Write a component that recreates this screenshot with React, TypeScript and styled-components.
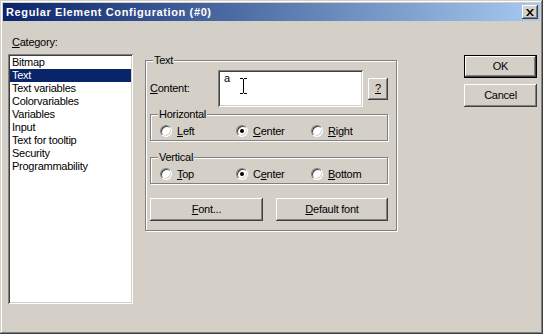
import React from 'react'
import styled, { createGlobalStyle } from 'styled-components'

const GlobalStyle = createGlobalStyle`
  html, body {
    margin: 0;
    padding: 0;
    background: #d4d0c8;
  }
  * {
    box-sizing: border-box;
  }
`

const face = '#d4d0c8'
const shadow = '#808080'
const dark = '#404040'

const Window = styled.div`
  width: 543px;
  height: 334px;
  padding: 3px;
  background: ${face};
  box-shadow: inset -1px -1px ${dark}, inset 1px 1px ${face}, inset -2px -2px ${shadow}, inset 2px 2px #fff;
  font-family: 'Liberation Sans', Arial, sans-serif;
  font-size: 11px;
  color: #000;
  display: flex;
  flex-direction: column;
`

const TitleBar = styled.div`
  height: 18px;
  display: flex;
  align-items: center;
  justify-content: space-between;
  padding: 0 2px 0 3px;
  background: linear-gradient(to right, #0a246a, #a6caf0);
`

const Title = styled.span`
  color: #fff;
  font-weight: bold;
  font-size: 11px;
  letter-spacing: 0.62px;
`

const CloseButton = styled.div`
  width: 16px;
  height: 14px;
  display: flex;
  align-items: center;
  justify-content: center;
  background: ${face};
  box-shadow: inset -1px -1px ${dark}, inset 1px 1px #fff, inset -2px -2px ${shadow};
`

const Body = styled.div`
  display: flex;
  align-items: flex-start;
  padding: 15px 0 0 5px;
`

const LeftColumn = styled.div`
  width: 125px;
  display: flex;
  flex-direction: column;
`

const Label = styled.div<{ $width?: number }>`
  line-height: 13px;
  letter-spacing: -0.25px;
  white-space: nowrap;
  width: ${({ $width }) => ($width ? `${$width}px` : 'auto')};
  flex-shrink: 0;
`

const CategoryLabel = styled(Label)`
  padding-left: 4px;
  margin-bottom: 5px;
`

const Sunken = styled.div`
  background: #fff;
  box-shadow: inset 1px 1px ${shadow}, inset -1px -1px #fff, inset 2px 2px ${dark}, inset -2px -2px ${face};
`

const ListBox = styled(Sunken)`
  height: 250px;
  padding: 2px 2px;
`

const ListItem = styled.div<{ $selected?: boolean }>`
  height: 13px;
  line-height: 13px;
  padding-left: 2px;
  letter-spacing: -0.25px;
  white-space: nowrap;
  background: ${({ $selected }) => ($selected ? '#0a246a' : 'transparent')};
  color: ${({ $selected }) => ($selected ? '#fff' : '#000')};
`

const Group = styled.fieldset<{ $width: number }>`
  margin: 0;
  padding: 0;
  min-width: 0;
  width: ${({ $width }) => $width}px;
  border: 1px solid ${shadow};
  box-shadow: inset 1px 1px #fff, 1px 1px #fff;
`

const Legend = styled.legend`
  margin-left: 7px;
  padding: 0 1px;
  line-height: 13px;
  letter-spacing: -0.25px;
  background: ${face};
`

const TextGroup = styled(Group)`
  margin: 18px 0 0 12px;
`

const TextGroupInner = styled.div`
  padding: 3px 8px 9px 4px;
  display: flex;
  flex-direction: column;
`

const ContentRow = styled.div`
  display: flex;
  align-items: center;
  gap: 5px;
`

const TextField = styled(Sunken)`
  position: relative;
  width: 145px;
  height: 37px;
  padding: 2px 6px;
  line-height: 13px;
`

const Cursor = styled.svg`
  position: absolute;
  left: 22px;
  top: 8px;
`

const GroupSpacer = styled.div<{ $h: number }>`
  height: ${({ $h }) => $h}px;
`

const RadioRow = styled.div`
  display: grid;
  grid-template-columns: 76px 75px auto;
  align-items: center;
  height: 16px;
  margin: 2px 0 1px 9px;
`

const RadioOption = styled.label`
  display: flex;
  align-items: center;
  gap: 5px;
  line-height: 13px;
  letter-spacing: -0.25px;
`

const RadioCircle = styled.span<{ $checked?: boolean }>`
  position: relative;
  width: 12px;
  height: 12px;
  border-radius: 50%;
  background: #fff;
  border: 1px solid;
  border-color: ${shadow} #fff #fff ${shadow};
  box-shadow: inset 1px 1px ${dark}, inset -1px -1px ${face};
  &::after {
    content: '';
    display: ${({ $checked }) => ($checked ? 'block' : 'none')};
    position: absolute;
    left: 3px;
    top: 3px;
    width: 4px;
    height: 4px;
    border-radius: 50%;
    background: #000;
  }
`

const Button = styled.div<{ $width: number; $height?: number; $default?: boolean }>`
  width: ${({ $width }) => $width}px;
  height: ${({ $height }) => $height ?? 23}px;
  display: flex;
  align-items: center;
  justify-content: center;
  background: ${face};
  line-height: 13px;
  letter-spacing: -0.25px;
  border: ${({ $default }) => ($default ? '1px solid #000' : 'none')};
  box-shadow: inset -1px -1px ${dark}, inset 1px 1px #fff, inset -2px -2px ${shadow}, inset 2px 2px ${face};
`

const ButtonRow = styled.div`
  display: flex;
  gap: 13px;
  margin-top: 14px;
`

const RightColumn = styled.div`
  display: flex;
  flex-direction: column;
  gap: 6px;
  margin: 19px 0 0 67px;
`

const U = styled.span`
  text-decoration: underline;
`

const categories = [
  'Bitmap',
  'Text',
  'Text variables',
  'Colorvariables',
  'Variables',
  'Input',
  'Text for tooltip',
  'Security',
  'Programmability',
]

const Radio = ({ checked, children }: { checked?: boolean; children: React.ReactNode }) => (
  <RadioOption>
    <RadioCircle $checked={checked} />
    <span>{children}</span>
  </RadioOption>
)

export default function App() {
  return (
    <>
      <GlobalStyle />
      <Window>
        <TitleBar>
          <Title>Regular Element Configuration (#0)</Title>
          <CloseButton>
            <svg width="8" height="7" viewBox="0 0 8 7">
              <path d="M0 0h2l2 2.5L6 0h2L5 3.5 8 7H6L4 4.5 2 7H0l3-3.5z" fill="#000" />
            </svg>
          </CloseButton>
        </TitleBar>
        <Body>
          <LeftColumn>
            <CategoryLabel>
              <U>C</U>ategory:
            </CategoryLabel>
            <ListBox>
              {categories.map((c) => (
                <ListItem key={c} $selected={c === 'Text'}>
                  {c}
                </ListItem>
              ))}
            </ListBox>
          </LeftColumn>

          <TextGroup $width={252}>
            <Legend>Text</Legend>
            <TextGroupInner>
              <ContentRow>
                <Label $width={63}>
                  <U>C</U>ontent:
                </Label>
                <TextField>
                  a
                  <Cursor width="7" height="16" viewBox="0 0 7 16">
                    <path d="M0 0.5h3M4 0.5h3M3.5 1v14M0 15.5h3M4 15.5h3" stroke="#000" strokeWidth="1" fill="none" />
                  </Cursor>
                </TextField>
                <Button $width={20} $height={22}>
                  <U>?</U>
                </Button>
              </ContentRow>

              <GroupSpacer $h={1} />
              <Group $width={238}>
                <Legend>Horizontal</Legend>
                <RadioRow>
                  <Radio>
                    <U>L</U>eft
                  </Radio>
                  <Radio checked>
                    <U>C</U>enter
                  </Radio>
                  <Radio>
                    <U>R</U>ight
                  </Radio>
                </RadioRow>
              </Group>

              <GroupSpacer $h={10} />
              <Group $width={238}>
                <Legend>Vertical</Legend>
                <RadioRow>
                  <Radio>
                    <U>T</U>op
                  </Radio>
                  <Radio checked>
                    C<U>e</U>nter
                  </Radio>
                  <Radio>
                    <U>B</U>ottom
                  </Radio>
                </RadioRow>
              </Group>

              <ButtonRow>
                <Button $width={113}>
                  <span>
                    <U>F</U>ont...
                  </span>
                </Button>
                <Button $width={112}>
                  <span>
                    <U>D</U>efault font
                  </span>
                </Button>
              </ButtonRow>
            </TextGroupInner>
          </TextGroup>

          <RightColumn>
            <Button $width={73} $default>
              OK
            </Button>
            <Button $width={73}>Cancel</Button>
          </RightColumn>
        </Body>
      </Window>
    </>
  )
}
